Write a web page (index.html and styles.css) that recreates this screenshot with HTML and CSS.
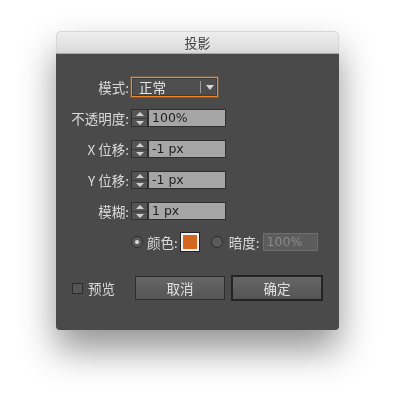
FILE: index.html
```html
<!DOCTYPE html>
<html lang="zh-CN">
<head>
    <meta charset="UTF-8">
    <title>投影</title>
    <link rel="stylesheet" href="styles.css">
</head>
<body>

<div class="dialog">
    <div class="titlebar">投影</div>

    <div class="panel">
        <div class="row first">
            <span class="label">模式:</span>
            <div class="select">
                <span class="select-value">正常</span>
                <span class="select-arrow"></span>
            </div>
        </div>

        <div class="row">
            <span class="label">不透明度:</span>
            <div class="spin"><span class="up"></span><span class="down"></span></div>
            <div class="field">100%</div>
        </div>

        <div class="row">
            <span class="label">X 位移:</span>
            <div class="spin"><span class="up"></span><span class="down"></span></div>
            <div class="field">-1 px</div>
        </div>

        <div class="row">
            <span class="label">Y 位移:</span>
            <div class="spin"><span class="up"></span><span class="down"></span></div>
            <div class="field">-1 px</div>
        </div>

        <div class="row">
            <span class="label">模糊:</span>
            <div class="spin"><span class="up"></span><span class="down"></span></div>
            <div class="field">1 px</div>
        </div>

        <div class="row">
            <span class="label"></span>
            <span class="radio checked"></span>
            <span class="text">颜色:</span>
            <span class="swatch"></span>
            <span class="radio second"></span>
            <span class="text">暗度:</span>
            <div class="field disabled">100%</div>
        </div>

        <div class="actions">
            <span class="checkbox"></span>
            <span class="text">预览</span>
            <button class="btn cancel">取消</button>
            <button class="btn ok">确定</button>
        </div>
    </div>
</div>

</body>
</html>
```

FILE: styles.css
```css
html, body { height: 100%; }
body { margin: 0; padding-top: 31px; box-sizing: border-box; background: #fff; font-family: "Noto Sans CJK SC", "DejaVu Sans", sans-serif; font-size: 13.5px; }

/* Window frame */
.dialog { width: 283px; margin-left: 56px; border-radius: 5px; filter: drop-shadow(0 20px 18px rgba(0, 0, 0, 0.42)); }
.titlebar { height: 23px; line-height: 23px; text-align: center; color: #3f3f3f; font-size: 13px; background: linear-gradient(#efefef, #dadada); border-radius: 5px 5px 0 0; border-bottom: 1px solid #a9a9a9; box-sizing: border-box; box-shadow: inset 0 0 0 1px #d6d6d6; }
.panel { height: 276px; background: #4a4a4a; border-radius: 0 0 4px 4px; padding-top: 23px; box-sizing: border-box; display: flex; flex-direction: column; gap: 13px; }

/* Form rows */
.row { display: flex; align-items: center; height: 18px; color: #dadada; }
.row.first { height: 20px; margin-bottom: -1px; }
.label { width: 73px; margin-right: 2px; text-align: right; white-space: nowrap; }

/* Mode dropdown */
.select { width: 87px; height: 20px; box-sizing: border-box; border: 1px solid #f2862c; box-shadow: 0 0 0 1px rgba(242, 134, 44, 0.25), inset 0 0 0 1px #3c3c3c; background: #4e4e4e; display: flex; align-items: center; }
.select-value { padding-left: 7px; flex: 1; color: #e2e2e2; }
.select-arrow { width: 15px; height: 12px; border-left: 1px solid #9a9a9a; margin-right: 1px; position: relative; }
.select-arrow::after { content: ""; position: absolute; left: 5px; top: 4px; border-left: 4px solid transparent; border-right: 4px solid transparent; border-top: 5px solid #d8d8d8; }

/* Number steppers */
.spin { width: 17px; height: 18px; box-sizing: border-box; border: 1px solid #2e2e2e; background: #555; display: flex; flex-direction: column; }
.spin span { flex: 1; position: relative; }
.spin .up { border-bottom: 1px solid #3a3a3a; }
.spin .up::after { content: ""; position: absolute; left: 4px; top: 2px; border-left: 4px solid transparent; border-right: 4px solid transparent; border-bottom: 4px solid #cfcfcf; }
.spin .down::after { content: ""; position: absolute; left: 4px; top: 2px; border-left: 4px solid transparent; border-right: 4px solid transparent; border-top: 4px solid #cfcfcf; }
.field { width: 78px; height: 18px; box-sizing: border-box; border: 1px solid #2f2f2f; background: #a6a6a6; color: #1e1e1e; padding-left: 3px; line-height: 16px; font-family: "DejaVu Sans", sans-serif; font-size: 12.5px; }
.field.disabled { width: 55px; margin-left: 3px; background: #5c5c5c; border-color: #6e6e6e; color: #8a8a8a; }

/* Colour row */
.radio { width: 12px; height: 12px; box-sizing: border-box; border-radius: 50%; border: 1px solid #2c2c2c; background: #5a5a5a; position: relative; }
.radio.checked::after { content: ""; position: absolute; left: 3px; top: 3px; width: 4px; height: 4px; border-radius: 50%; background: #dcdcdc; }
.radio.second { margin-left: 12px; margin-right: 2px; }
.row .text { margin-left: 4px; }
.swatch { width: 18px; height: 18px; box-sizing: border-box; margin-left: 3px; border: 2px solid #f2f2f2; background: #d2661f; box-shadow: 0 0 0 1px #222; }

/* Bottom buttons */
.actions { display: flex; align-items: center; height: 26px; margin-top: 11px; padding-left: 16px; color: #dadada; }
.checkbox { width: 11px; height: 11px; box-sizing: border-box; border: 1px solid #2a2a2a; background: #555; }
.actions .text { margin-left: 5px; }
.btn { height: 24px; width: 90px; box-sizing: border-box; border: 1px solid #2c2c2c; background: linear-gradient(#666, #555); color: #e0e0e0; font-family: inherit; font-size: 13.5px; padding: 0; }
.cancel { margin-left: 20px; }
.ok { height: 26px; width: 92px; margin-left: 6px; border: 2px solid #232323; }
```
